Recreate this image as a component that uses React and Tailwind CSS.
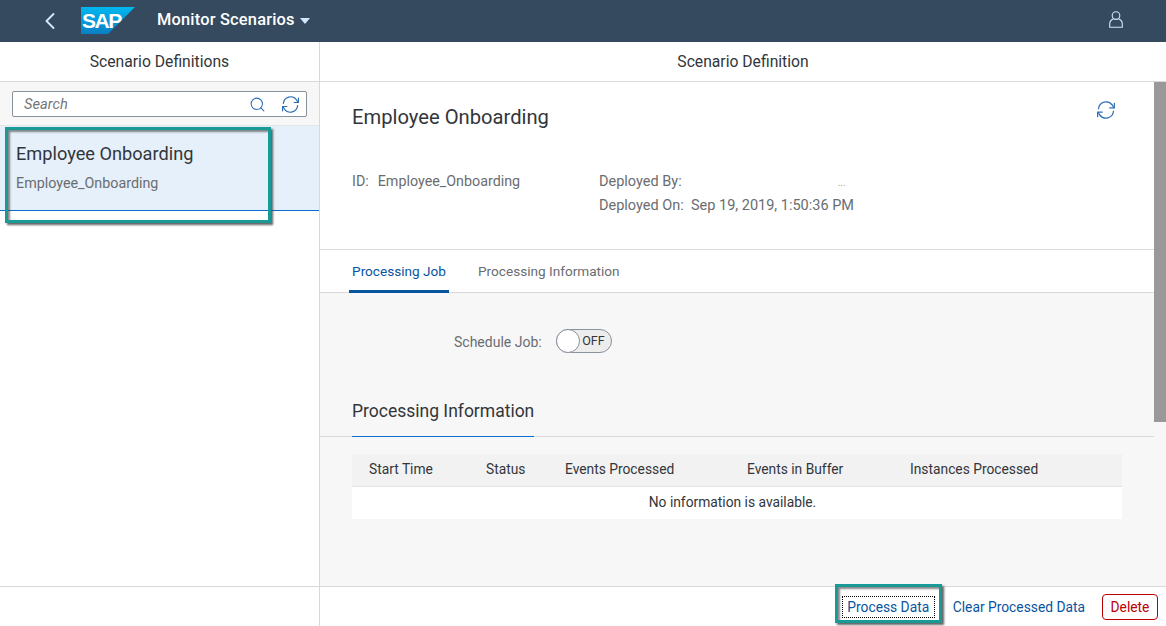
import { ChevronLeft, Search } from 'lucide-react';

const SapLogo = () => (
    <svg width="54" height="27" viewBox="0 0 54 27">
        <defs>
            <linearGradient id="sapBlue" x1="0" y1="0" x2="0" y2="1">
                <stop offset="0" stopColor="#00b8f1" />
                <stop offset="1" stopColor="#0a7fc4" />
            </linearGradient>
        </defs>
        <polygon points="0,0 54,0 27,27 0,27" fill="url(#sapBlue)" />
        <text x="1" y="21" fill="#fff" fontSize="21" fontWeight="700" letterSpacing="-1.5" fontFamily="'Liberation Sans', sans-serif">SAP</text>
    </svg>
);

const Refresh = ({ size = 18 }) => (
    <svg width={size} height={size} viewBox="0 0 24 24" fill="none" stroke="#2f6fb5" strokeWidth="1.5" strokeLinecap="round" strokeLinejoin="round">
        <path d="M3 10.5A9.2 9.2 0 0 1 19.5 6l1.8 3" />
        <path d="M22 4v5.5h-5.5" />
        <path d="M21 13.5A9.2 9.2 0 0 1 4.5 18l-1.8-3" />
        <path d="M2 20v-5.5h5.5" />
    </svg>
);

const Person = () => (
    <svg width="14" height="17" viewBox="0 0 14 17" fill="none" stroke="#d1e8ff" strokeWidth="1.1">
        <circle cx="7" cy="4.6" r="3.8" />
        <path d="M4.4 8C2 8.8.7 10.6.7 13v3.3h12.6V13c0-2.4-1.3-4.2-3.7-5" />
    </svg>
);

const columns = [
    { label: 'Start Time', width: 'w-[117px]' },
    { label: 'Status', width: 'w-[79px]' },
    { label: 'Events Processed', width: 'w-[182px]' },
    { label: 'Events in Buffer', width: 'w-[163px]' },
    { label: 'Instances Processed', width: 'flex-1' },
];

export default function App() {
    return (
        <div className="h-[626px] w-[1166px] overflow-hidden flex flex-col bg-white text-[14.3px] text-[#6a6d70] font-['Roboto','Noto_Sans',sans-serif] relative">
            {/* Shell bar */}
            <header className="h-[42px] shrink-0 bg-[#354a5f] flex items-center text-white">
                <ChevronLeft className="ml-[36px] w-[28px] h-[28px] text-[#d1e8ff]" strokeWidth={1.6} />
                <div className="ml-[17px] mt-[-1px]"><SapLogo /></div>
                <span className="ml-[22px] mt-[-2px] text-[16.4px] font-medium tracking-[0.2px]">Monitor Scenarios</span>
                <span className="ml-[5px] w-0 h-0 border-x-[5px] border-x-transparent border-t-[6px] border-t-[#d1e8ff]"></span>
                <span className="ml-auto mr-[43px] mt-[-3px]"><Person /></span>
            </header>

            <div className="flex flex-1 min-h-0">
                {/* Master list */}
                <aside className="w-[320px] shrink-0 border-r border-[#d9d9d9] flex flex-col">
                    <div className="h-[40px] shrink-0 border-b border-[#d9d9d9] flex items-center justify-center text-[15.7px] text-[#32363a]">Scenario Definitions</div>
                    <div className="h-[44px] shrink-0 bg-[#f7f7f7] border-b border-[#e5e5e5] px-[12px] pt-[9px]">
                        <div className="h-[26px] w-[295px] bg-white border border-[#89919a] rounded-[2px] flex items-center">
                            <span className="ml-[11px] italic text-[14.7px] text-[#74777a]">Search</span>
                            <Search className="ml-auto w-[17px] h-[17px] text-[#2f6fb5]" strokeWidth={1.5} />
                            <span className="ml-[15px] mr-[6px]"><Refresh size={19} /></span>
                        </div>
                    </div>
                    <div className="h-[85px] shrink-0 bg-[#e5f0fa] border-b border-[#0a6ed1] pl-[16px] pt-[15px]">
                        <div className="text-[18.2px] leading-[26px] text-[#32363a]">Employee Onboarding</div>
                        <div className="mt-[6px] text-[14.3px] leading-[20px] text-[#6a6d70]">Employee_Onboarding</div>
                    </div>
                    <div className="flex-1"></div>
                    <div className="h-[40px] shrink-0 border-t border-[#d9d9d9]"></div>
                </aside>

                {/* Detail */}
                <main className="flex-1 min-w-0 flex flex-col">
                    <div className="h-[40px] shrink-0 border-b border-[#d9d9d9] flex items-center justify-center text-[15.7px] text-[#32363a]">Scenario Definition</div>
                    <div className="flex-1 min-h-0 flex">
                        <div className="flex-1 min-w-0 flex flex-col">
                            <section className="h-[168px] shrink-0 border-b border-[#d9d9d9] pl-[32px] pr-[30px] pt-[21px]">
                                <div className="flex items-center justify-between h-[28px]">
                                    <h1 className="text-[20.2px] text-[#32363a]">Employee Onboarding</h1>
                                    <span className="mt-[-14px] mr-[8px]"><Refresh size={20} /></span>
                                </div>
                                <div className="mt-[38px] flex leading-[24px]">
                                    <div className="w-[247px]">ID:<span className="ml-[9px]">Employee_Onboarding</span></div>
                                    <div className="text-[14.5px] pt-[1px]">
                                        <div className="h-[24px]">Deployed By:<span className="ml-[156px] text-[#a0a0a0] text-[10px] leading-none">...</span></div>
                                        <div className="h-[24px]">Deployed On:&nbsp; Sep 19, 2019, 1:50:36 PM</div>
                                    </div>
                                </div>
                            </section>
                            <nav className="h-[43px] shrink-0 border-b border-[#d9d9d9] pl-[29px] flex items-stretch text-[13.6px] whitespace-nowrap">
                                <div className="w-[100px] flex items-center justify-center text-[#0854a0] border-b-[3px] border-[#0854a0] mb-[-1px] pt-[3px]">Processing Job</div>
                                <div className="ml-[29px] flex items-center">Processing Information</div>
                            </nav>
                            <section className="flex-1 min-h-0 bg-[#f7f7f7] flex flex-col">
                                <div className="flex items-center mt-[37px] ml-[134px] h-[24px] text-[14px]">
                                    <span>Schedule Job:</span>
                                    <span className="ml-[14px] mt-[-2px] w-[56px] h-[24px] rounded-full bg-[#ededed] border border-[#89919a] relative flex items-center justify-end pr-[6px] text-[12.5px] text-[#32363a]">
                                        OFF
                                        <span className="absolute left-[-1px] top-[-1px] w-[24px] h-[24px] rounded-full bg-white border border-[#89919a]"></span>
                                    </span>
                                </div>
                                <div className="mt-[45px] h-[38px] border-b border-[#d9d9d9] pl-[32px] flex">
                                    <h2 className="w-[182px] h-[38px] border-b border-[#0a6ed1] text-[17.5px] leading-[24px] text-[#32363a] whitespace-nowrap">Processing Information</h2>
                                </div>
                                <div className="mt-[17px] mx-[32px] w-[770px] text-[13.8px]">
                                    <div className="h-[33px] bg-[#f2f2f2] border-b border-[#e5e5e5] flex items-center pl-[17px] pb-[2px] text-[#32363a]">
                                        {columns.map((col) => (
                                            <div key={col.label} className={col.width}>{col.label}</div>
                                        ))}
                                    </div>
                                    <div className="h-[32px] bg-white flex items-center justify-center pr-[9px] pb-[2px] text-[#32363a]">No information is available.</div>
                                </div>
                            </section>
                        </div>
                        {/* Scrollbar */}
                        <div className="w-[12px] shrink-0 bg-[#f7f7f7]">
                            <div className="h-[340px] bg-[#999999]"></div>
                        </div>
                    </div>
                    <footer className="h-[40px] shrink-0 border-t border-[#d9d9d9] flex items-center justify-end pr-[8px] pt-[1px] text-[13.8px] text-[#0854a0]">
                        <span className="h-[22px] w-[93px] flex items-center justify-center border border-dotted border-black">Process Data</span>
                        <span className="ml-[18px]">Clear Processed Data</span>
                        <span className="ml-[17px] h-[26px] w-[56px] flex items-center justify-center rounded-[4px] border border-[#bb0000] text-[#bb0000]">Delete</span>
                    </footer>
                </main>
            </div>

            {/* Callout frames drawn on top of the screenshot */}
            <div className="absolute left-[5px] top-[127px] w-[266px] h-[96px] border-[3px] border-[#1a9a96] shadow-[2px_2px_2px_rgba(60,60,60,0.8),inset_2px_2px_2px_rgba(60,60,60,0.6)]"></div>
            <div className="absolute left-[835px] top-[584px] w-[107px] h-[39px] border-[3px] border-[#1a9a96] shadow-[2px_2px_2px_rgba(60,60,60,0.8),inset_2px_2px_2px_rgba(60,60,60,0.6)]"></div>
        </div>
    );
}
